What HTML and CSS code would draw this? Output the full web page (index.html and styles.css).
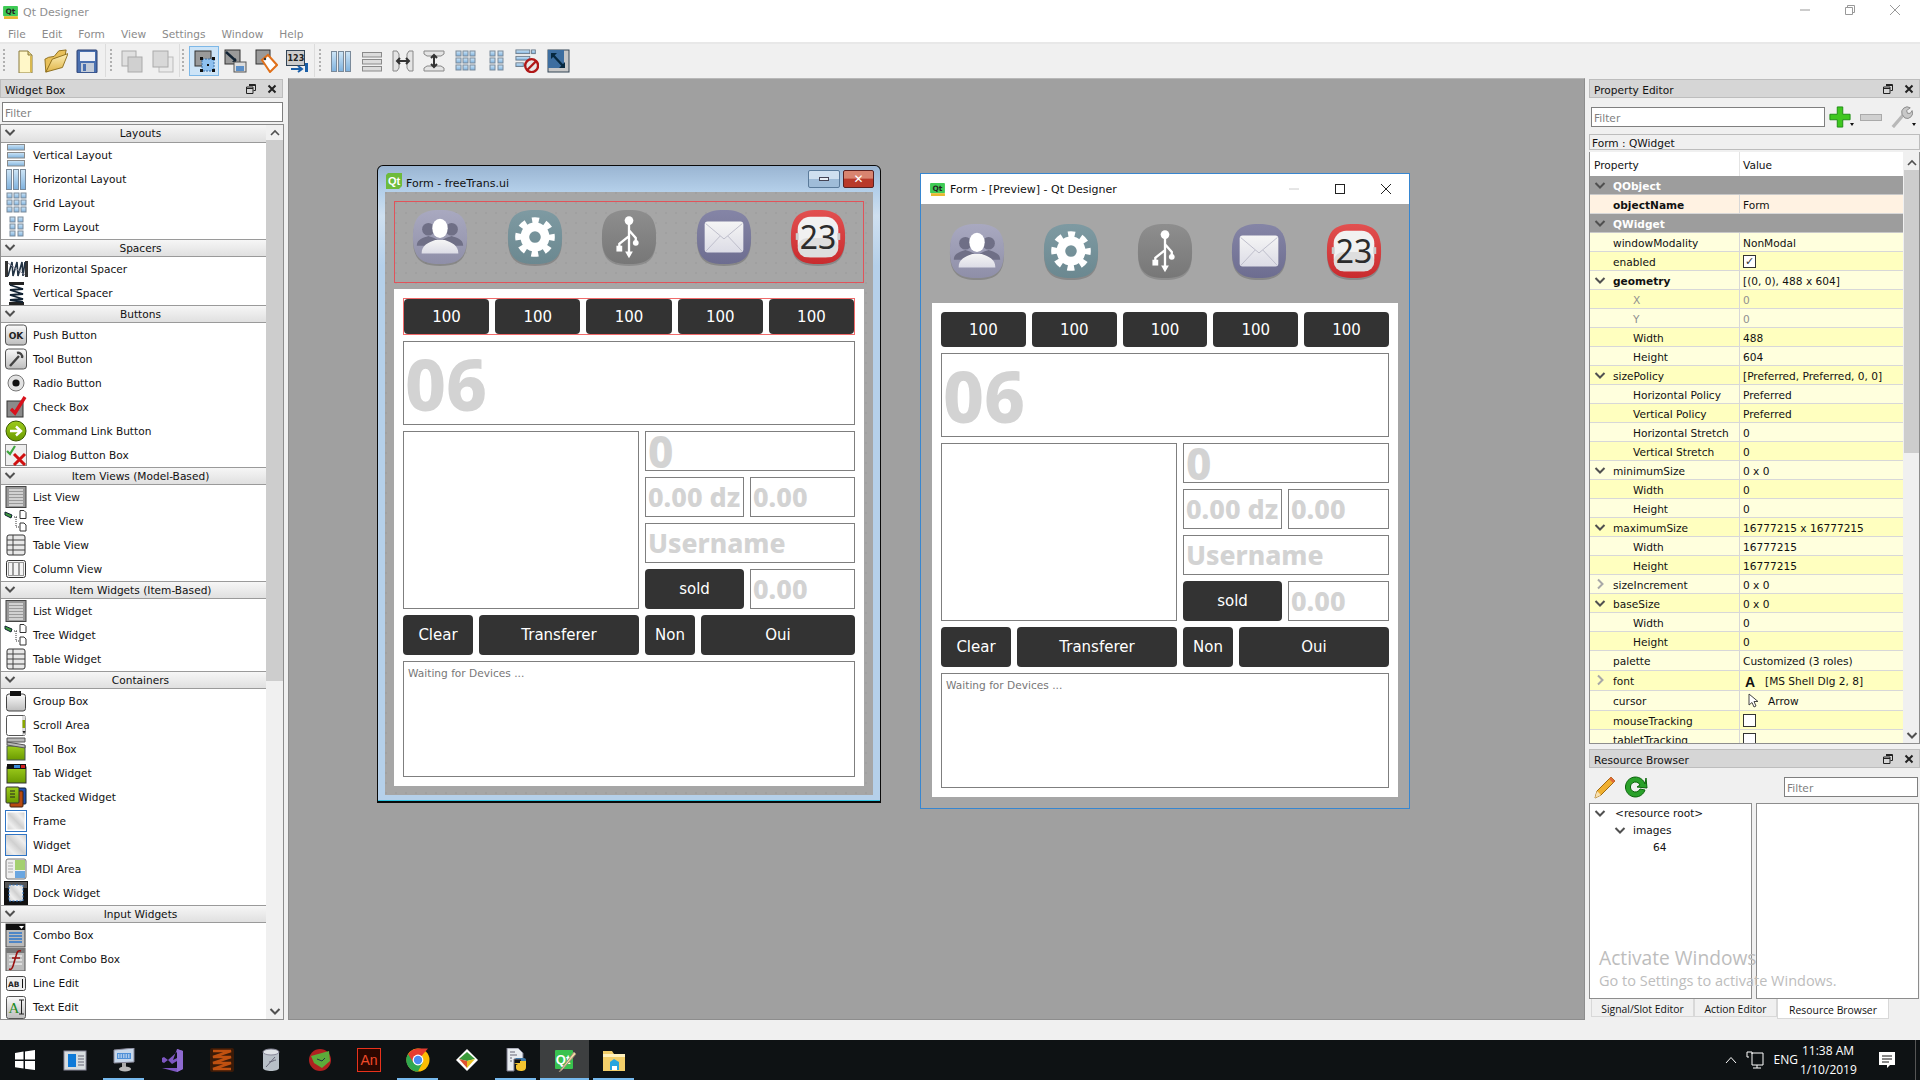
FILE: index.html
```html
<!DOCTYPE html>
<html lang="en">
<head>
<meta charset="utf-8">
<title>Qt Designer</title>
<link rel="stylesheet" href="styles.css">
</head>
<body>
<svg class="defs" aria-hidden="true">
<defs>
<linearGradient id="gBtn" x1="0" y1="0" x2="0" y2="1"><stop offset="0" stop-color="#fafafa"/><stop offset="1" stop-color="#bdbdbd"/></linearGradient>
<linearGradient id="gBlue" x1="0" y1="0" x2="0" y2="1"><stop offset="0" stop-color="#cfe6f7"/><stop offset="1" stop-color="#7fb2de"/></linearGradient>
<linearGradient id="gUser" x1="0" y1="0" x2="0" y2="1"><stop offset="0" stop-color="#a9a9c0"/><stop offset="1" stop-color="#8f8fa8"/></linearGradient>
<linearGradient id="gGear" x1="0" y1="0" x2="0" y2="1"><stop offset="0" stop-color="#7e9aa2"/><stop offset="1" stop-color="#6b8890"/></linearGradient>
<linearGradient id="gUsb" x1="0" y1="0" x2="0" y2="1"><stop offset="0" stop-color="#8e8e8e"/><stop offset="1" stop-color="#777"/></linearGradient>
<linearGradient id="gMail" x1="0" y1="0" x2="0" y2="1"><stop offset="0" stop-color="#8585a6"/><stop offset="1" stop-color="#6d6d90"/></linearGradient>
<linearGradient id="gCal" x1="0" y1="0" x2="0" y2="1"><stop offset="0" stop-color="#e25050"/><stop offset="1" stop-color="#c92b2e"/></linearGradient>
<linearGradient id="gEnv" x1="0" y1="0" x2="0" y2="1"><stop offset="0" stop-color="#f5f5f5"/><stop offset="1" stop-color="#dcdce6"/></linearGradient>
<linearGradient id="gGreen" x1="0" y1="0" x2="0" y2="1"><stop offset="0" stop-color="#9ccb1c"/><stop offset="1" stop-color="#6a9a00"/></linearGradient>
<linearGradient id="gFolder" x1="0" y1="0" x2="0" y2="1"><stop offset="0" stop-color="#fdf0b8"/><stop offset="1" stop-color="#e0b448"/></linearGradient>
<linearGradient id="gHatch" x1="0" y1="1" x2="1" y2="0"><stop offset="0" stop-color="#d0d0d0"/><stop offset=".25" stop-color="#eee"/><stop offset=".5" stop-color="#d0d0d0"/><stop offset=".75" stop-color="#eee"/><stop offset="1" stop-color="#d0d0d0"/></linearGradient>

<symbol id="chev" viewBox="0 0 12 12"><path d="M1.5 4 L6 8.5 L10.5 4" fill="none" stroke="#505050" stroke-width="2"/></symbol>
<symbol id="chevr" viewBox="0 0 12 12"><path d="M4 1.5 L8.5 6 L4 10.5" fill="none" stroke="#a8a8a8" stroke-width="2"/></symbol>
<symbol id="up" viewBox="0 0 12 12"><path d="M2 8 L6 4 L10 8" fill="none" stroke="#505050" stroke-width="1.6"/></symbol>
<symbol id="dockfloat" viewBox="0 0 10 10"><path d="M3 .5h6.5v6h-2M.5 3h6.5v6.5H.5z M.5 4.5H7 M3 1.5h6.5" fill="none" stroke="#222" stroke-width="1"/></symbol>
<symbol id="dockclose" viewBox="0 0 10 10"><path d="M1.5 1.5 L8.5 8.5 M8.5 1.5 L1.5 8.5" stroke="#222" stroke-width="2"/></symbol>

<symbol id="vlay" viewBox="0 0 24 24"><g fill="url(#gBlue)" stroke="#8a8a8a"><rect x="3.5" y="1.5" width="17" height="5.5"/><rect x="3.5" y="9.5" width="17" height="5.5"/><rect x="3.5" y="17.5" width="17" height="5.5"/></g></symbol>
<symbol id="hlay" viewBox="0 0 24 24"><g fill="url(#gBlue)" stroke="#7a8a9a"><rect x="2.5" y="2.5" width="5" height="20"/><rect x="9.5" y="2.5" width="5" height="20"/><rect x="16.5" y="2.5" width="5" height="20"/></g></symbol>
<symbol id="vlaygrey" viewBox="0 0 24 24"><g fill="#dcdcdc" stroke="#8a8a8a"><rect x="2.5" y="3.5" width="19" height="4.5"/><rect x="2.5" y="10.5" width="19" height="4.5"/><rect x="2.5" y="17.5" width="19" height="4.5"/></g></symbol>
<symbol id="grid" viewBox="0 0 24 24"><g fill="url(#gBlue)" stroke="#7a8a9a"><rect x="3" y="2" width="5" height="5"/><rect x="10" y="2" width="5" height="5"/><rect x="17" y="2" width="5" height="5"/><rect x="3" y="9" width="5" height="5"/><rect x="10" y="9" width="5" height="5"/><rect x="17" y="9" width="5" height="5"/><rect x="3" y="16" width="5" height="5"/><rect x="10" y="16" width="5" height="5"/><rect x="17" y="16" width="5" height="5"/></g></symbol>
<symbol id="form" viewBox="0 0 24 24"><g fill="url(#gBlue)" stroke="#7a8a9a"><rect x="6" y="2" width="5" height="5"/><rect x="14" y="2" width="5" height="5"/><rect x="6" y="9" width="5" height="5"/><rect x="14" y="9" width="5" height="5"/><rect x="6" y="16" width="5" height="5"/><rect x="14" y="16" width="5" height="5"/></g></symbol>
<symbol id="hspacer" viewBox="0 0 24 24"><rect x="1" y="4" width="3" height="16" fill="#333"/><rect x="21" y="4" width="3" height="16" fill="#333"/><path d="M4 19 L8 5 L9 19 L13 5 L14 19 L18 5 L19 19 L21 5" fill="none" stroke="#234" stroke-width="1.6"/><path d="M4 6 L21 18" stroke="#889" stroke-width="1"/></symbol>
<symbol id="vspacer" viewBox="0 0 24 24"><rect x="5" y="1" width="15" height="3" fill="#222"/><rect x="5" y="21" width="15" height="3" fill="#222"/><path d="M6 4 L19 8 L6 9 L19 13 L6 14 L19 18 L6 19 L19 21" fill="none" stroke="#123" stroke-width="1.8"/></symbol>
<symbol id="pushbtn" viewBox="0 0 24 24"><rect x="1.5" y="2" width="21" height="20" rx="3" fill="url(#gBtn)" stroke="#555"/><text x="12" y="15.5" text-anchor="middle" class="svgt" font-size="9">OK</text></symbol>
<symbol id="toolbtn" viewBox="0 0 24 24"><rect x="1.5" y="2" width="21" height="20" rx="3" fill="url(#gBtn)" stroke="#555"/><path d="M6 19 L15 9 M13 6 a4 4 0 0 1 5 5" fill="none" stroke="#444" stroke-width="2.4"/></symbol>
<symbol id="radio" viewBox="0 0 24 24"><circle cx="12" cy="12" r="8" fill="#e2e2e2" stroke="#777"/><circle cx="12" cy="12" r="3.6" fill="#111"/></symbol>
<symbol id="check" viewBox="0 0 24 24"><rect x="3" y="6" width="16" height="16" fill="#8a8a8a" stroke="#333"/><path d="M7 14 L11 18 L21 2" fill="none" stroke="#d8121d" stroke-width="3.4"/></symbol>
<symbol id="cmdlink" viewBox="0 0 24 24"><circle cx="12" cy="12" r="10" fill="url(#gGreen)" stroke="#3b5b00"/><path d="M6 12 H16 M12 7.5 L17 12 L12 16.5" fill="none" stroke="#fff" stroke-width="2.4"/></symbol>
<symbol id="dialog" viewBox="0 0 24 24"><rect x="1.5" y="1.5" width="21" height="21" fill="#eee" stroke="#888"/><path d="M3 8 L6 11 L11 3" fill="none" stroke="#3ca53c" stroke-width="2.2"/><path d="M10 11 L21 22 M21 11 L10 22" stroke="#d01010" stroke-width="3"/></symbol>
<symbol id="listv" viewBox="0 0 24 24"><rect x="2" y="1.5" width="20" height="21" fill="#9a9a9a" stroke="#444"/><path d="M5 5h14M5 8h14M5 11h14M5 14h14M5 17h14M5 20h14" stroke="#e4e4e4" stroke-width="1.4"/></symbol>
<symbol id="treev" viewBox="0 0 24 24"><path d="M1 3 L8 6 L7 9 L1 6Z" fill="#3e9a3e" stroke="#123"/><path d="M10 8h4M12 8v10h3" stroke="#333" stroke-dasharray="1 1" fill="none"/><path d="M16 1.5h4l2 2v6h-6zM16 14h4l2 2v6h-6z" fill="#fff" stroke="#333"/></symbol>
<symbol id="tablev" viewBox="0 0 24 24"><rect x="3" y="2" width="18" height="20" rx="2" fill="#e8e8e8" stroke="#333"/><path d="M3 7h18M3 12h18M3 17h18M9 2v20" stroke="#444"/></symbol>
<symbol id="colv" viewBox="0 0 24 24"><rect x="2.5" y="3.5" width="19" height="17" rx="2" fill="#f4f4f4" stroke="#333"/><path d="M9 5v14M15 5v14" stroke="#444"/><rect x="4.5" y="5.5" width="15" height="13" fill="none" stroke="#999"/></symbol>
<symbol id="group" viewBox="0 0 24 24"><rect x="2.5" y="5" width="19" height="17" rx="2.5" fill="url(#gBtn)" stroke="#444"/><rect x="6" y="2" width="11" height="5" fill="#111"/></symbol>
<symbol id="scroll" viewBox="0 0 24 24"><rect x="2.5" y="2.5" width="19" height="20" rx="2" fill="#fff" stroke="#555"/><rect x="18" y="3" width="3.5" height="19" fill="#ddd"/><rect x="18.5" y="7" width="2.5" height="8" fill="#8aa800"/><path d="M18.5 18h3l-1.5 3z" fill="#222"/></symbol>
<symbol id="toolbox" viewBox="0 0 24 24"><rect x="3" y="9" width="18" height="14" fill="url(#gGreen)" stroke="#455"/><path d="M3 1h18v4H3zM3 5l18 3v3L3 8z" fill="#b8b8b8" stroke="#555"/></symbol>
<symbol id="tabw" viewBox="0 0 24 24"><rect x="3" y="6" width="19" height="16" fill="url(#gGreen)" stroke="#333"/><rect x="3" y="3" width="19" height="5" fill="#111"/><rect x="10" y="4" width="6" height="3" fill="#3a8ad8"/><rect x="17" y="4" width="4" height="3" fill="#d02020"/></symbol>
<symbol id="stacked" viewBox="0 0 24 24"><rect x="9" y="3" width="13" height="16" rx="1" fill="#2050b0" stroke="#123"/><rect x="6" y="6" width="13" height="16" rx="1" fill="#b84a10" stroke="#421"/><rect x="2" y="2" width="13" height="16" rx="1" fill="url(#gGreen)" stroke="#333"/><path d="M6 6h5M6 9h5M6 12h5" stroke="#222"/></symbol>
<symbol id="frame" viewBox="0 0 24 24"><rect x="1.5" y="1.5" width="21" height="21" fill="#fff" stroke="#2f74c4"/><rect x="3.5" y="3.5" width="17" height="17" fill="url(#gHatch)"/></symbol>
<symbol id="widget" viewBox="0 0 24 24"><rect x="1.5" y="1.5" width="21" height="21" fill="url(#gHatch)" stroke="#2f74c4"/></symbol>
<symbol id="mdi" viewBox="0 0 24 24"><rect x="2" y="2" width="20" height="20" rx="2" fill="#eee" stroke="#777"/><rect x="11" y="3" width="10" height="10" fill="#a4d070"/><rect x="11" y="14" width="10" height="7" fill="#6aa6e0"/><path d="M4 6h5M4 9h5M4 12h5M4 15h5" stroke="#aaa"/></symbol>
<symbol id="dock" viewBox="0 0 24 24"><rect x="0" y="0" width="24" height="24" fill="#111"/><rect x="1" y="1" width="22" height="6" fill="#555"/><rect x="5" y="4" width="14" height="16" fill="url(#gHatch)" stroke="#2f74c4" stroke-dasharray="2 1.5"/></symbol>
<symbol id="combo" viewBox="0 0 24 24"><rect x="2" y="1" width="19" height="23" fill="#bbb" stroke="#444"/><rect x="2" y="1" width="19" height="6" fill="#111"/><path d="M15 3h5l-2.5 3z" fill="#fff"/><path d="M5 10h13M5 13h13M5 16h13M5 19h13" stroke="#4f86c6" stroke-width="2"/></symbol>
<symbol id="fontcombo" viewBox="0 0 24 24"><rect x="2" y="1" width="19" height="23" fill="#bbb" stroke="#555"/><rect x="2" y="1" width="19" height="5" fill="#777"/><path d="M5 9h13M5 13h13M5 17h13" stroke="#ddd" stroke-width="2"/><path d="M17 4c-3-1-4 1-5 5l-3 10c-1 3-2 4-4 3M8 11h8" fill="none" stroke="#9a1010" stroke-width="1.6"/></symbol>
<symbol id="lineedit" viewBox="0 0 24 24"><rect x="2.5" y="5.5" width="19" height="14" rx="2" fill="#eee" stroke="#444"/><text x="4" y="15.5" class="svgt" font-size="7.5">AB</text><path d="M18.5 8v9" stroke="#111"/></symbol>
<symbol id="textedit" viewBox="0 0 24 24"><rect x="2.5" y="1.5" width="19" height="22" rx="2" fill="url(#gBtn)" stroke="#555"/><text x="4.5" y="18" class="svgs" font-size="15" fill="#1f8a1f">A</text><path d="M15 5h5M15 19h5M17.5 5v14" stroke="#222"/></symbol>

<symbol id="newdoc" viewBox="0 0 24 24"><path d="M6 2h9l4 4v18H6z" fill="#fff7c8" stroke="#8a7a3a"/><path d="M15 2v4h4" fill="#e4d38a" stroke="#8a7a3a"/><path d="M18 7v16" stroke="#d8b850" stroke-width="2"/></symbol>
<symbol id="openf" viewBox="0 0 26 26"><path d="M2 25 L1 11 L5 9 L11 8 L16 2 L24 1 L22 12Z" fill="#e8c05a" stroke="#8a6a18"/><path d="M2 25 L9 11 L26 5 L20 20Z" fill="url(#gFolder)" stroke="#8a6a18"/></symbol>
<symbol id="save" viewBox="0 0 24 24"><rect x="2" y="1" width="20" height="23" rx="1" fill="#4a70b0" stroke="#2a3f70"/><rect x="5" y="3" width="15" height="9" fill="#eef0f6"/><rect x="6" y="14" width="13" height="9" fill="#c4ccd8"/><rect x="8" y="15" width="3" height="7" fill="#4a70b0"/></symbol>
<symbol id="copyg" viewBox="0 0 24 24"><rect x="2" y="2" width="14" height="15" fill="#e0e0e0" stroke="#aaa"/><rect x="8" y="8" width="14" height="15" fill="#d0d0d0" stroke="#aaa"/></symbol>
<symbol id="copyg2" viewBox="0 0 24 24"><rect x="8" y="8" width="14" height="15" fill="#eaeaea" stroke="#bbb"/><rect x="2" y="2" width="15" height="16" fill="#d8d8d8" stroke="#aaa"/></symbol>
<symbol id="editw" viewBox="0 0 24 24"><rect x="3" y="2" width="16" height="15" fill="#9a9a9a" stroke="#333"/><rect x="10" y="10" width="12" height="12" fill="#8ec0ef" stroke="#3a6ea5" stroke-dasharray="2 1"/><g fill="#111"><rect x="8" y="8" width="3" height="3"/><rect x="20" y="8" width="3" height="3"/><rect x="8" y="20" width="3" height="3"/><rect x="20" y="20" width="3" height="3"/><rect x="15" y="15" width="2" height="2"/></g></symbol>
<symbol id="signal" viewBox="0 0 24 24"><rect x="2" y="1" width="15" height="14" fill="#9a9a9a" stroke="#333"/><path d="M3 3 L13 12" stroke="#123" stroke-width="2.4"/><path d="M9 13h4v-4z" fill="#123"/><rect x="11" y="13" width="12" height="10" fill="#ddd" stroke="#555"/><rect x="13" y="17" width="8" height="5" fill="#5b8fc8"/></symbol>
<symbol id="buddy" viewBox="0 0 24 24"><rect x="2" y="1" width="14" height="14" fill="#9a9a9a" stroke="#333"/><path d="M8 11 L14 6 L23 16 L16 23Z" fill="#fff" stroke="#e0701a" stroke-width="2"/><circle cx="11" cy="10" r="1.2" fill="#333"/></symbol>
<symbol id="taborder" viewBox="0 0 24 24"><rect x="1.5" y="1.5" width="18" height="15" fill="#ccc" stroke="#345"/><text x="2.5" y="12" class="svgt" font-size="8" fill="#1a4f8a">123</text><path d="M6 20h10M13 17l4 3-4 3" fill="none" stroke="#1a5fa8" stroke-width="2"/><rect x="20" y="14" width="3" height="9" fill="#1a5fa8"/></symbol>
<symbol id="hsplit" viewBox="0 0 24 24"><g fill="#e4e4e4" stroke="#888"><path d="M2 2h4l2 3v14l-2 3H2zM22 2h-4l-2 3v14l2 3h4z"/></g><path d="M6 12h12M9 9l-3 3 3 3M15 9l3 3-3 3" fill="none" stroke="#333" stroke-width="2"/></symbol>
<symbol id="vsplit" viewBox="0 0 24 24"><g fill="#e4e4e4" stroke="#888"><path d="M2 2h20v3l-3 2H5L2 5zM2 22h20v-3l-3-2H5l-3 2z"/></g><path d="M12 6v12M9 9l3-3 3 3M9 15l3 3 3-3" fill="none" stroke="#333" stroke-width="2"/></symbol>
<symbol id="breakl" viewBox="0 0 26 26"><g fill="url(#gBlue)" stroke="#6a7a8a"><rect x="1" y="1" width="15" height="4"/><rect x="18" y="1" width="4" height="4"/><rect x="1" y="8" width="15" height="4"/><rect x="1" y="15" width="8" height="4"/></g><circle cx="18" cy="18" r="7" fill="#e8e8e8" stroke="#b01818" stroke-width="2.6"/><path d="M13 23 L23 13" stroke="#b01818" stroke-width="2.6"/></symbol>
<symbol id="adjust" viewBox="0 0 24 24"><rect x="2" y="1" width="21" height="22" fill="#c8c8c8" stroke="#345"/><rect x="2" y="1" width="16" height="18" fill="#3d6ea0"/><path d="M6 5 L18 18" stroke="#06283f" stroke-width="2.4"/><path d="M5 10V4h6zM19 13v6h-6z" fill="#06283f"/></symbol>

<symbol id="plus" viewBox="0 0 24 24"><path d="M9 1h6v8h8v6h-8v8H9v-8H1V9h8z" fill="#3fc71f" stroke="#1b8a10"/></symbol>
<symbol id="wrench" viewBox="0 0 24 24"><path d="M2 23 L14 9" stroke="#b8b8b8" stroke-width="3.6"/><path d="M12 9 a6 6 0 0 1 9-7 l-4 3 1 3 3 0 2-3 a6 6 0 0 1-8 8z" fill="#c8c8c8" stroke="#888"/></symbol>
<symbol id="pencil" viewBox="0 0 24 24"><path d="M2 23 L4 16 L18 2 L22 6 L8 20Z" fill="#f0b030" stroke="#a06a10"/><path d="M18 2 L22 6 L20 8 L16 4Z" fill="#e06a3a"/><path d="M2 23 L4 16 L8 20Z" fill="#f7e0b0"/></symbol>
<symbol id="refresh" viewBox="0 0 24 24"><path d="M21 9 A10 10 0 1 0 21 15 L16 14 A5 5 0 1 1 16 10 L13 12 L23 13 L22 3Z" fill="#2aa12a" stroke="#0b640b" stroke-width="1"/></symbol>
<symbol id="cursor" viewBox="0 0 12 16"><path d="M1 1 L1 12 L4 9.5 L6 14 L8 13 L6 8.5 L10 8.5Z" fill="#fff" stroke="#444"/></symbol>
<symbol id="qtlogo" viewBox="0 0 16 16"><path d="M2 0h14v13l-3 3H0V2z" fill="#6dbb3c"/><text x="8" y="12" text-anchor="middle" class="svgb" font-size="11" fill="#fff">Qt</text></symbol>
<symbol id="qtdes" viewBox="0 0 16 14"><rect x="0" y="0" width="16" height="11" rx="1" fill="#3fcb55"/><text x="8" y="8.5" text-anchor="middle" class="svgt" font-size="8" fill="#fff">Qt</text><rect x="1" y="11" width="15" height="3" fill="#e8b830"/></symbol>

<symbol id="aUser" viewBox="0 0 60 60"><path d="M30 3 C51 3 58 11 58 31 C58 51 51 59 30 59 C9 59 2 51 2 31 C2 11 9 3 30 3Z" fill="#000" opacity=".18"/><path d="M30 1 C51 1 58 9 58 29 C58 49 51 57 30 57 C9 57 2 49 2 29 C2 9 9 1 30 1Z" fill="url(#gUser)"/><g fill="#6f6f86"><circle cx="18" cy="21" r="6.5"/><path d="M6 38 C6 31 13 30 18 28 C23 30 30 31 30 38Z"/><circle cx="42" cy="21" r="6.5"/><path d="M30 38 C30 31 37 30 42 28 C47 30 54 31 54 38Z"/></g><ellipse cx="30" cy="20" rx="8" ry="10" fill="#fff"/><path d="M11 46 C11 37 18 35 25 32 L35 32 C42 35 49 37 49 46Z" fill="url(#gEnv)"/></symbol>
<symbol id="aGear" viewBox="0 0 60 60"><path d="M30 3 C51 3 58 11 58 31 C58 51 51 59 30 59 C9 59 2 51 2 31 C2 11 9 3 30 3Z" fill="#000" opacity=".18"/><path d="M30 1 C51 1 58 9 58 29 C58 49 51 57 30 57 C9 57 2 49 2 29 C2 9 9 1 30 1Z" fill="url(#gGear)"/><circle cx="30" cy="29" r="10.5" fill="none" stroke="#fff" stroke-width="9"/><circle cx="30" cy="29" r="17" fill="none" stroke="#fff" stroke-width="7" stroke-dasharray="7 6.35" stroke-dashoffset="3.5"/></symbol>
<symbol id="aUsb" viewBox="0 0 60 60"><path d="M30 3 C51 3 58 11 58 31 C58 51 51 59 30 59 C9 59 2 51 2 31 C2 11 9 3 30 3Z" fill="#000" opacity=".15"/><path d="M30 1 C51 1 58 9 58 29 C58 49 51 57 30 57 C9 57 2 49 2 29 C2 9 9 1 30 1Z" fill="url(#gUsb)"/><circle cx="30" cy="12" r="4.5" fill="#fff"/><path d="M30 12 V48 M30 22 L37 30 V34 M30 28 L20 36 V40" fill="none" stroke="#fff" stroke-width="2.4"/><circle cx="37" cy="35" r="3" fill="#fff"/><rect x="17" y="38" width="6" height="6" fill="#fff"/><path d="M26 44 h8 l-4 7z" fill="#fff"/></symbol>
<symbol id="aMail" viewBox="0 0 60 60"><path d="M30 3 C51 3 58 11 58 31 C58 51 51 59 30 59 C9 59 2 51 2 31 C2 11 9 3 30 3Z" fill="#000" opacity=".18"/><path d="M30 1 C51 1 58 9 58 29 C58 49 51 57 30 57 C9 57 2 49 2 29 C2 9 9 1 30 1Z" fill="url(#gMail)"/><rect x="10" y="13" width="40" height="32" rx="3" fill="url(#gEnv)"/><path d="M11 15 L30 31 L49 15 M11 44 L26 28 M49 44 L34 28" fill="none" stroke="#bdbdca" stroke-width="1"/></symbol>
<symbol id="aCal" viewBox="0 0 60 60"><path d="M30 3 C51 3 58 11 58 31 C58 51 51 59 30 59 C9 59 2 51 2 31 C2 11 9 3 30 3Z" fill="#000" opacity=".18"/><path d="M30 1 C51 1 58 9 58 29 C58 49 51 57 30 57 C9 57 2 49 2 29 C2 9 9 1 30 1Z" fill="url(#gCal)"/><rect x="9" y="8" width="42" height="42" rx="13" fill="#f1f1f1"/><rect x="9" y="30" width="42" height="20" rx="10" fill="#dedede"/><rect x="7" y="25" width="3" height="7" fill="#ccc"/><rect x="50" y="25" width="3" height="7" fill="#ccc"/><text x="30" y="41" text-anchor="middle" class="svgo" font-size="33" fill="#2c2c2c">23</text></symbol>

<symbol id="tWin" viewBox="0 0 24 24"><path d="M2 5 L10.5 3.6 V11.5 H2Z M12 3.4 L22 2 V11.5 H12Z M2 13 H10.5 V20.6 L2 19.2Z M12 13 H22 V22 L12 20.8Z" fill="#fff"/></symbol>
<symbol id="tDoc" viewBox="0 0 24 24"><rect x="1" y="3" width="22" height="19" fill="#d8dde0" stroke="#889"/><rect x="5" y="6" width="8" height="13" fill="#0f7ad8"/><path d="M15 8h6M15 11h6M15 14h6M15 17h6" stroke="#667"/></symbol>
<symbol id="tMon" viewBox="0 0 24 24"><path d="M2 2 L22 0 V14 L2 15Z" fill="#c8d8ea" stroke="#889"/><path d="M5 5h14v6H5z" fill="#4e90d8"/><path d="M6 7h12M6 9h12" stroke="#fff" stroke-dasharray="1.5 1"/><rect x="10" y="15" width="4" height="4" fill="#aaa"/><ellipse cx="13" cy="21" rx="6" ry="2.6" fill="#b8b8b8"/></symbol>
<symbol id="tVs" viewBox="0 0 24 24"><path d="M16 1 L22 3 V21 L16 24 L1 20 L16 20 V4 L7 12 L3 9 L1 10 V14 L3 15 L7 12 L11 16 L16 13 V10 L12 12" fill="#7e57c2"/><path d="M16 1 L22 3 V21 L16 24Z" fill="#8e6ad0"/></symbol>
<symbol id="tZig" viewBox="0 0 24 24"><rect x="0" y="0" width="24" height="24" rx="2" fill="#3a1a08"/><path d="M3 3h18L3 9h18L3 15h18L3 21h18" fill="none" stroke="#c05010" stroke-width="2.4"/></symbol>
<symbol id="tDb" viewBox="0 0 24 24"><path d="M4 4v16c0 4 16 4 16 0V4z" fill="#b8c0c8"/><ellipse cx="12" cy="4" rx="8" ry="3" fill="#e0e4e8" stroke="#889"/><path d="M7 19 L16 9 M10 14c3 0 5-2 7-2" stroke="#667" fill="none"/></symbol>
<symbol id="tBall" viewBox="0 0 24 24"><circle cx="12" cy="12" r="11" fill="#b02020"/><path d="M3 8 L21 3 L22 13 L14 20 L6 15Z" fill="#5cab3a"/><path d="M9 11l5 2 3-3" stroke="#234" fill="none"/></symbol>
<symbol id="tAn" viewBox="0 0 24 24"><rect x=".5" y=".5" width="23" height="23" fill="#2a0700" stroke="#e8321c"/><text x="12" y="17" text-anchor="middle" class="svgs2" font-size="14" fill="#f04a2a">An</text></symbol>
<symbol id="tChrome" viewBox="0 0 24 24"><circle cx="12" cy="12" r="11.5" fill="#fbbc05"/><path d="M12 12 L2 17 A11.5 11.5 0 0 1 12 .5 H22 L12 12" fill="#e53c2f"/><path d="M2 6 A11.5 11.5 0 0 0 12 23.5 L17 14 L7 14Z" fill="#2fa84f"/><circle cx="12" cy="12" r="5.4" fill="#fff"/><circle cx="12" cy="12" r="4.2" fill="#4a8bf0"/></symbol>
<symbol id="tDia" viewBox="0 0 24 24"><path d="M12 1 L23 12 L12 23 L1 12Z" fill="#fff"/><path d="M12 4 L20 11 L12 13 L4 11Z" fill="#3a9a3a"/><path d="M4 11 L12 13 V20Z" fill="#e05030"/><path d="M20 11 L12 13 V20Z" fill="#e8c020"/></symbol>
<symbol id="tPy" viewBox="0 0 24 24"><path d="M3 0h11l5 5v6H10v12H3z" fill="#e8ecf0" stroke="#778"/><path d="M6 4h5M6 7h7M6 10h2M6 13h2" stroke="#667"/><path d="M11 11h6v4h5v-3c0-2-2-2-4-2h-6z" fill="#3f78a8"/><path d="M10 15h6v-2h-1 7v6c0 3-2 4-5 4s-5-1-5-3v-3h2z" fill="#f4c430"/></symbol>
<symbol id="tQt" viewBox="0 0 24 24"><rect x="2" y="2" width="18" height="19" rx="1" fill="#39c24f"/><text x="10" y="16" text-anchor="middle" class="svgb" font-size="13" fill="#fff">Qt</text><path d="M6 24 L21 4 L23 6 L9 22Z" fill="#f0d9a0" stroke="#987"/></symbol>
<symbol id="tFolder" viewBox="0 0 24 24"><path d="M1 3h9l2 3h11v17H1z" fill="#f3cf6a"/><rect x="1" y="6" width="22" height="3" fill="#fff1bd"/><path d="M8 14 L12 11 L17 14 V22 H8Z" fill="#27a5de"/><rect x="10" y="18" width="5" height="4" fill="#fff"/></symbol>
<symbol id="tNet" viewBox="0 0 18 18"><path d="M6 2h11v12H6z M3 6H1V1h5v2 M11 14v3 M7 17h8" fill="none" stroke="#fff"/></symbol>
<symbol id="tNote" viewBox="0 0 18 18"><path d="M1 1h16v13H12L9 17v-3H1z" fill="#fff"/><path d="M4 5h10M4 8h10M4 11h7" stroke="#111"/></symbol>
</defs>
</svg>

<div class="app">
  <header class="titlebar">
    <svg class="ico-title"><use href="#qtdes"/></svg>
    <span class="title-text">Qt Designer</span>
    <div class="winctl">
      <svg class="ctl" viewBox="0 0 14 14"><path d="M2 7h10" stroke="#999"/></svg>
      <svg class="ctl" viewBox="0 0 14 14"><path d="M2.5 4.5h7v7h-7z M4.5 4V2.5h7v7H10" fill="none" stroke="#999"/></svg>
      <svg class="ctl" viewBox="0 0 14 14"><path d="M2 2 L12 12 M12 2 L2 12" stroke="#999"/></svg>
    </div>
  </header>
  <nav class="menubar">
    <span>File</span><span>Edit</span><span>Form</span><span>View</span><span>Settings</span><span>Window</span><span>Help</span>
  </nav>
  <div class="toolbar">
    <div class="tgroup tg1"><i class="grip"></i>
      <span class="tbtn"><svg><use href="#newdoc"/></svg></span>
      <span class="tbtn"><svg><use href="#openf"/></svg></span>
      <span class="tbtn"><svg><use href="#save"/></svg></span>
    </div>
    <div class="tgroup tg2"><i class="grip"></i>
      <span class="tbtn"><svg><use href="#copyg"/></svg></span>
      <span class="tbtn"><svg><use href="#copyg2"/></svg></span>
    </div>
    <div class="tgroup tg3"><i class="grip"></i>
      <span class="tbtn active"><svg><use href="#editw"/></svg></span>
      <span class="tbtn"><svg><use href="#signal"/></svg></span>
      <span class="tbtn"><svg><use href="#buddy"/></svg></span>
      <span class="tbtn"><svg><use href="#taborder"/></svg></span>
    </div>
    <div class="tgroup tg4"><i class="grip"></i>
      <span class="tbtn"><svg><use href="#hlay"/></svg></span>
      <span class="tbtn"><svg><use href="#vlaygrey"/></svg></span>
      <span class="tbtn"><svg><use href="#hsplit"/></svg></span>
      <span class="tbtn"><svg><use href="#vsplit"/></svg></span>
      <span class="tbtn"><svg><use href="#grid"/></svg></span>
      <span class="tbtn"><svg><use href="#form"/></svg></span>
      <span class="tbtn"><svg><use href="#breakl"/></svg></span>
      <span class="tbtn"><svg><use href="#adjust"/></svg></span>
    </div>
  </div>

  <main class="main">
    <aside class="ldock">
      <div class="docktitle"><span>Widget Box</span><svg class="dk"><use href="#dockfloat"/></svg><svg class="dk"><use href="#dockclose"/></svg></div>
      <div class="lfilter"><div class="filter">Filter</div></div>
      <div class="wbox">
        <div class="wlist">
          <div class="wsec"><svg class="chev"><use href="#chev"/></svg><span>Layouts</span></div>
          <div class="wrow"><svg><use href="#vlay"/></svg>Vertical Layout</div>
          <div class="wrow"><svg><use href="#hlay"/></svg>Horizontal Layout</div>
          <div class="wrow"><svg><use href="#grid"/></svg>Grid Layout</div>
          <div class="wrow"><svg><use href="#form"/></svg>Form Layout</div>
          <div class="wsec"><svg class="chev"><use href="#chev"/></svg><span>Spacers</span></div>
          <div class="wrow"><svg><use href="#hspacer"/></svg>Horizontal Spacer</div>
          <div class="wrow"><svg><use href="#vspacer"/></svg>Vertical Spacer</div>
          <div class="wsec"><svg class="chev"><use href="#chev"/></svg><span>Buttons</span></div>
          <div class="wrow"><svg><use href="#pushbtn"/></svg>Push Button</div>
          <div class="wrow"><svg><use href="#toolbtn"/></svg>Tool Button</div>
          <div class="wrow"><svg><use href="#radio"/></svg>Radio Button</div>
          <div class="wrow"><svg><use href="#check"/></svg>Check Box</div>
          <div class="wrow"><svg><use href="#cmdlink"/></svg>Command Link Button</div>
          <div class="wrow"><svg><use href="#dialog"/></svg>Dialog Button Box</div>
          <div class="wsec"><svg class="chev"><use href="#chev"/></svg><span>Item Views (Model-Based)</span></div>
          <div class="wrow"><svg><use href="#listv"/></svg>List View</div>
          <div class="wrow"><svg><use href="#treev"/></svg>Tree View</div>
          <div class="wrow"><svg><use href="#tablev"/></svg>Table View</div>
          <div class="wrow"><svg><use href="#colv"/></svg>Column View</div>
          <div class="wsec"><svg class="chev"><use href="#chev"/></svg><span>Item Widgets (Item-Based)</span></div>
          <div class="wrow"><svg><use href="#listv"/></svg>List Widget</div>
          <div class="wrow"><svg><use href="#treev"/></svg>Tree Widget</div>
          <div class="wrow"><svg><use href="#tablev"/></svg>Table Widget</div>
          <div class="wsec"><svg class="chev"><use href="#chev"/></svg><span>Containers</span></div>
          <div class="wrow"><svg><use href="#group"/></svg>Group Box</div>
          <div class="wrow"><svg><use href="#scroll"/></svg>Scroll Area</div>
          <div class="wrow"><svg><use href="#toolbox"/></svg>Tool Box</div>
          <div class="wrow"><svg><use href="#tabw"/></svg>Tab Widget</div>
          <div class="wrow"><svg><use href="#stacked"/></svg>Stacked Widget</div>
          <div class="wrow"><svg><use href="#frame"/></svg>Frame</div>
          <div class="wrow"><svg><use href="#widget"/></svg>Widget</div>
          <div class="wrow"><svg><use href="#mdi"/></svg>MDI Area</div>
          <div class="wrow"><svg><use href="#dock"/></svg>Dock Widget</div>
          <div class="wsec"><svg class="chev"><use href="#chev"/></svg><span>Input Widgets</span></div>
          <div class="wrow"><svg><use href="#combo"/></svg>Combo Box</div>
          <div class="wrow"><svg><use href="#fontcombo"/></svg>Font Combo Box</div>
          <div class="wrow"><svg><use href="#lineedit"/></svg>Line Edit</div>
          <div class="wrow"><svg><use href="#textedit"/></svg>Text Edit</div>
        </div>
        <div class="vscroll wscroll">
          <svg class="sarrow"><use href="#up"/></svg>
          <div class="thumb"></div>
          <svg class="sarrow"><use href="#chev"/></svg>
        </div>
      </div>
    </aside>

    <section class="workspace">
      <article class="window win-a">
        <div class="wtitle">
          <svg class="wqt"><use href="#qtlogo"/></svg>
          <span class="wname">Form - freeTrans.ui</span>
          <div class="aeroctl">
            <span class="aero-min"><i></i></span>
            <span class="aero-close">&#x2715;</span>
          </div>
        </div>
        <div class="client gridded">
          <div class="iconbar outlined">
            <svg class="appicon"><use href="#aUser"/></svg>
            <svg class="appicon"><use href="#aGear"/></svg>
            <svg class="appicon"><use href="#aUsb"/></svg>
            <svg class="appicon"><use href="#aMail"/></svg>
            <svg class="appicon"><use href="#aCal"/></svg>
          </div>
          <div class="panel">
            <div class="btnrow outlined"><button class="b">100</button><button class="b">100</button><button class="b">100</button><button class="b">100</button><button class="b">100</button></div>
            <div class="field big">06</div>
            <div class="midrow">
              <div class="field listbox"></div>
              <div class="rightcol">
                <div class="field h40 f40">0</div>
                <div class="pair"><div class="field h40 f27 w99">0.00 dz</div><div class="field h40 f27 grow">0.00</div></div>
                <div class="field h40 f28">Username</div>
                <div class="pair"><button class="b w99 h40">sold</button><div class="field h40 f27 grow">0.00</div></div>
              </div>
            </div>
            <div class="actrow">
              <button class="b clear">Clear</button><button class="b transfer">Transferer</button><button class="b non">Non</button><button class="b oui">Oui</button>
            </div>
            <div class="field logbox">Waiting for Devices ...</div>
          </div>
        </div>
      </article>

      <article class="window win-b">
        <div class="wtitle">
          <svg class="wqt2"><use href="#qtdes"/></svg>
          <span class="wname">Form - [Preview] - Qt Designer</span>
          <div class="winctl2">
            <svg class="ctl2" viewBox="0 0 12 12"><path d="M1 6h10" stroke="#ccc"/></svg>
            <svg class="ctl2" viewBox="0 0 12 12"><rect x="1.5" y="1.5" width="9" height="9" fill="none" stroke="#222"/></svg>
            <svg class="ctl2" viewBox="0 0 12 12"><path d="M1 1 L11 11 M11 1 L1 11" stroke="#222"/></svg>
          </div>
        </div>
        <div class="client">
          <div class="iconbar">
            <svg class="appicon"><use href="#aUser"/></svg>
            <svg class="appicon"><use href="#aGear"/></svg>
            <svg class="appicon"><use href="#aUsb"/></svg>
            <svg class="appicon"><use href="#aMail"/></svg>
            <svg class="appicon"><use href="#aCal"/></svg>
          </div>
          <div class="panel">
            <div class="btnrow"><button class="b">100</button><button class="b">100</button><button class="b">100</button><button class="b">100</button><button class="b">100</button></div>
            <div class="field big">06</div>
            <div class="midrow">
              <div class="field listbox"></div>
              <div class="rightcol">
                <div class="field h40 f40">0</div>
                <div class="pair"><div class="field h40 f27 w99">0.00 dz</div><div class="field h40 f27 grow">0.00</div></div>
                <div class="field h40 f28">Username</div>
                <div class="pair"><button class="b w99 h40">sold</button><div class="field h40 f27 grow">0.00</div></div>
              </div>
            </div>
            <div class="actrow">
              <button class="b clear">Clear</button><button class="b transfer">Transferer</button><button class="b non">Non</button><button class="b oui">Oui</button>
            </div>
            <div class="field logbox">Waiting for Devices ...</div>
          </div>
        </div>
      </article>
    </section>

    <aside class="rdock">
      <div class="docktitle"><span>Property Editor</span><svg class="dk"><use href="#dockfloat"/></svg><svg class="dk"><use href="#dockclose"/></svg></div>
      <div class="pfilter">
        <div class="filter grow">Filter</div>
        <svg class="pf-ico"><use href="#plus"/></svg><i class="caret"></i>
        <span class="minus"></span>
        <svg class="pf-ico wr"><use href="#wrench"/></svg><i class="caret"></i>
      </div>
      <div class="objline">Form : QWidget</div>
      <div class="ptable">
        <div class="pcols">
          <div class="phead"><span class="pn">Property</span><span class="pv">Value</span></div>
          <div class="pgroup"><svg class="parrow"><use href="#chev"/></svg>QObject</div>
          <div class="prow name"><span class="pn l1 bold">objectName</span><span class="pv">Form</span></div>
          <div class="pgroup"><svg class="parrow"><use href="#chev"/></svg>QWidget</div>
          <div class="prow"><span class="pn l1">windowModality</span><span class="pv">NonModal</span></div>
          <div class="prow alt"><span class="pn l1">enabled</span><span class="pv"><i class="cb on">&#x2713;</i></span></div>
          <div class="prow"><span class="pn l1 bold"><svg class="parrow"><use href="#chev"/></svg>geometry</span><span class="pv">[(0, 0), 488 x 604]</span></div>
          <div class="prow alt dim"><span class="pn l2">X</span><span class="pv">0</span></div>
          <div class="prow dim"><span class="pn l2">Y</span><span class="pv">0</span></div>
          <div class="prow alt"><span class="pn l2">Width</span><span class="pv">488</span></div>
          <div class="prow"><span class="pn l2">Height</span><span class="pv">604</span></div>
          <div class="prow alt"><span class="pn l1"><svg class="parrow"><use href="#chev"/></svg>sizePolicy</span><span class="pv">[Preferred, Preferred, 0, 0]</span></div>
          <div class="prow"><span class="pn l2">Horizontal Policy</span><span class="pv">Preferred</span></div>
          <div class="prow alt"><span class="pn l2">Vertical Policy</span><span class="pv">Preferred</span></div>
          <div class="prow"><span class="pn l2">Horizontal Stretch</span><span class="pv">0</span></div>
          <div class="prow alt"><span class="pn l2">Vertical Stretch</span><span class="pv">0</span></div>
          <div class="prow"><span class="pn l1"><svg class="parrow"><use href="#chev"/></svg>minimumSize</span><span class="pv">0 x 0</span></div>
          <div class="prow alt"><span class="pn l2">Width</span><span class="pv">0</span></div>
          <div class="prow"><span class="pn l2">Height</span><span class="pv">0</span></div>
          <div class="prow alt"><span class="pn l1"><svg class="parrow"><use href="#chev"/></svg>maximumSize</span><span class="pv">16777215 x 16777215</span></div>
          <div class="prow"><span class="pn l2">Width</span><span class="pv">16777215</span></div>
          <div class="prow alt"><span class="pn l2">Height</span><span class="pv">16777215</span></div>
          <div class="prow"><span class="pn l1"><svg class="parrow"><use href="#chevr"/></svg>sizeIncrement</span><span class="pv">0 x 0</span></div>
          <div class="prow alt"><span class="pn l1"><svg class="parrow"><use href="#chev"/></svg>baseSize</span><span class="pv">0 x 0</span></div>
          <div class="prow"><span class="pn l2">Width</span><span class="pv">0</span></div>
          <div class="prow alt"><span class="pn l2">Height</span><span class="pv">0</span></div>
          <div class="prow tall"><span class="pn l1">palette</span><span class="pv">Customized (3 roles)</span></div>
          <div class="prow alt tall"><span class="pn l1"><svg class="parrow"><use href="#chevr"/></svg>font</span><span class="pv"><b class="fonta">A</b>[MS Shell Dlg 2, 8]</span></div>
          <div class="prow tall"><span class="pn l1">cursor</span><span class="pv"><svg class="curs"><use href="#cursor"/></svg>Arrow</span></div>
          <div class="prow alt"><span class="pn l1">mouseTracking</span><span class="pv"><i class="cb"></i></span></div>
          <div class="prow"><span class="pn l1">tabletTracking</span><span class="pv"><i class="cb"></i></span></div>
        </div>
        <div class="vscroll pscroll">
          <svg class="sarrow"><use href="#up"/></svg>
          <div class="thumb"></div>
          <svg class="sarrow"><use href="#chev"/></svg>
        </div>
      </div>
      <div class="docktitle rb"><span>Resource Browser</span><svg class="dk"><use href="#dockfloat"/></svg><svg class="dk"><use href="#dockclose"/></svg></div>
      <div class="rtools">
        <svg class="rt"><use href="#pencil"/></svg>
        <svg class="rt"><use href="#refresh"/></svg>
        <div class="filter rfilter">Filter</div>
      </div>
      <div class="rpanes">
        <div class="rtree">
          <div class="tnode n0"><svg class="parrow"><use href="#chev"/></svg>&lt;resource root&gt;</div>
          <div class="tnode n1"><svg class="parrow"><use href="#chev"/></svg>images</div>
          <div class="tnode n2">64</div>
        </div>
        <div class="rview"></div>
        <div class="activate"><div class="a1">Activate Windows</div><div class="a2">Go to Settings to activate Windows.</div></div>
      </div>
      <div class="tabs"><span class="tab t1">Signal/Slot Editor</span><span class="tab t2">Action Editor</span><span class="tab t3 cur">Resource Browser</span></div>
    </aside>
  </main>

  <div class="statusgap"></div>

  <footer class="taskbar">
    <span class="tk"><svg><use href="#tWin"/></svg></span>
    <span class="tk"><svg><use href="#tDoc"/></svg></span>
    <span class="tk run"><svg><use href="#tMon"/></svg></span>
    <span class="tk"><svg><use href="#tVs"/></svg></span>
    <span class="tk"><svg><use href="#tZig"/></svg></span>
    <span class="tk"><svg><use href="#tDb"/></svg></span>
    <span class="tk"><svg><use href="#tBall"/></svg></span>
    <span class="tk"><svg><use href="#tAn"/></svg></span>
    <span class="tk run"><svg><use href="#tChrome"/></svg></span>
    <span class="tk"><svg><use href="#tDia"/></svg></span>
    <span class="tk run"><svg><use href="#tPy"/></svg></span>
    <span class="tk run act"><svg><use href="#tQt"/></svg></span>
    <span class="tk run"><svg><use href="#tFolder"/></svg></span>
    <div class="tray">
      <svg class="tcaret" viewBox="0 0 12 8"><path d="M1 7 L6 1.5 L11 7" fill="none" stroke="#fff"/></svg>
      <svg class="tnet"><use href="#tNet"/></svg>
      <span class="eng">ENG</span>
      <div class="clock"><div>11:38 AM</div><div>1/10/2019</div></div>
      <svg class="tnote"><use href="#tNote"/></svg>
      <i class="showdesk"></i>
    </div>
  </footer>
</div>
</body>
</html>
```

FILE: styles.css
```css
* { box-sizing: border-box; }
html, body { margin: 0; padding: 0; }
body { width: 1920px; height: 1080px; overflow: hidden; font: 10.6px/1 "DejaVu Sans", sans-serif; color: #111; background: #f0f0f0; }
.defs { position: absolute; width: 0; height: 0; }
.svgt { font-family: "DejaVu Sans", sans-serif; font-weight: 700; fill: #222; }
.svgs { font-family: "Liberation Serif", serif; }
.svgs2 { font-family: "Liberation Sans", sans-serif; }
.svgb { font-family: "Liberation Sans", sans-serif; font-weight: 700; }
.svgo { font-family: "Noto Sans", sans-serif; }
.grow { flex: 1; }

.app { width: 1920px; height: 1080px; display: flex; flex-direction: column; overflow: hidden; background: #f0f0f0; }

.titlebar { height: 24px; background: #fff; display: flex; align-items: center; padding-left: 3px; flex: none; }
.ico-title { width: 15px; height: 13px; margin-right: 5px; }
.title-text { color: #8f8f8f; font-size: 11px; }
.winctl { margin-left: auto; display: flex; gap: 31px; padding-right: 18px; margin-top: -4px; }
.ctl { width: 14px; height: 14px; }

.menubar { height: 20px; background: #fff; border-bottom: 2px solid #e8e8e8; display: flex; padding: 2px 0 0 8px; gap: 16px; align-items: center; color: #8a8a8a; flex: none; }

.toolbar { height: 34px; display: flex; flex: none; background: #f0f0f0; }
.tgroup { display: flex; align-items: center; gap: 1px; border-right: 1px solid #dcdcdc; height: 33px; }
.tg1 { width: 106px; padding-left: 3px; }
.tg2 { width: 74px; padding-left: 4px; }
.tg3 { width: 135px; padding-left: 2px; }
.tg4 { padding-left: 4px; border-right: 0; }
.grip { width: 2px; height: 24px; margin-right: 4px; background-image: linear-gradient(#b0b0b0 50%, transparent 50%); background-size: 2px 4px; }
.tbtn { width: 30px; height: 30px; display: flex; align-items: center; justify-content: center; }
.tbtn svg { width: 24px; height: 24px; }
.tbtn.active { background: #cde4f7; border: 1px solid #7db8e8; }

.main { height: 942px; display: flex; flex: none; }
.ldock { width: 284px; flex: none; display: flex; flex-direction: column; padding-top: 1px; }
.rdock { width: 331px; flex: none; display: flex; flex-direction: column; padding-top: 1px; margin-left: 4px; }

.docktitle { height: 19px; flex: none; display: flex; align-items: center; background: #d6d6d6; border: 1px solid #bdbdbd; padding: 3px 0 0 4px; }
.ldock .docktitle { margin-right: 1px; }
.docktitle span { flex: 1; }
.dk { width: 10px; height: 10px; margin: -3px 11px 0 0; }
.dk:last-child { margin-right: 5px; }

.filter { height: 20px; border: 1px solid #7f7f7f; background: #fff; color: #7f7f7f; padding: 3px 0 0 2px; display: flex; align-items: center; }
.lfilter { padding: 4px 1px 2px 2px; flex: none; }

.wbox { flex: 1; display: flex; border: 1px solid #8d8d8d; border-left: 0; background: #fff; overflow: hidden; min-height: 0; }
.wlist { width: 266px; flex: none; overflow: hidden; background: #fff; border-left: 1px solid #8d8d8d; }
.wsec { height: 18px; display: flex; align-items: center; border-top: 1px solid #9a9a9a; border-bottom: 1px solid #9a9a9a; background: linear-gradient(#f6f6f6, #e0e0e0); position: relative; padding-left: 14px; }
.wsec:first-child { border-top: 0; }
.wsec span { flex: 1; text-align: center; }
.chev { position: absolute; left: 3px; top: 1px; width: 12px; height: 12px; }
.wrow { height: 24px; display: flex; align-items: center; padding-left: 3px; gap: 5px; }
.wrow svg { width: 24px; height: 24px; flex: none; }

.vscroll { width: 16px; flex: none; background: #f0f0f0; display: flex; flex-direction: column; align-items: center; }
.wscroll { width: 17px; }
.sarrow { width: 12px; height: 12px; margin: 2px 0; flex: none; }
.thumb { width: 100%; background: #cdcdcd; }
.wscroll .thumb { height: 541px; margin-bottom: auto; }
.wscroll .sarrow:first-child { margin: 2px 0 1px; }
.pscroll { border-left: 1px solid #f0f0f0; }
.pscroll .sarrow:first-child { margin: 5px 0 1px; }
.pscroll .thumb { height: 283px; margin-bottom: auto; }

.workspace { flex: 1; margin-left: 4px; background: #a0a0a0; position: relative; border: 1px solid #8d8d8d; border-top: 1px solid #b8b8b8; }

.window { position: absolute; display: flex; flex-direction: column; }
.win-a { left: 88px; top: 86px; width: 504px; height: 638px; border: 1px solid #0a0a0a; border-bottom: 2px solid #0a0a0a; border-radius: 6px 6px 0 0; padding: 0 7px 6px; background: linear-gradient(#9ab5d2 0, #b5d0ea 26px, #cfe0f0 50px, #b5d0ea 100px); box-shadow: inset 0 -1px 0 #2fc4e0; }
.win-b { left: 631px; top: 94px; width: 490px; height: 636px; border: 1px solid #3786d0; background: #a6a6a6; }

.wtitle { display: flex; align-items: center; flex: none; }
.win-a .wtitle { height: 26px; }
.win-b .wtitle { height: 30px; background: #fff; padding-left: 9px; }
.wqt { width: 16px; height: 16px; margin: 3px 4px 0 1px; }
.wqt2 { width: 15px; height: 13px; margin-right: 5px; }
.win-a .wname { margin-top: 8px; font-size: 11px; }
.win-b .wname { font-size: 11px; }
.aeroctl { margin-left: auto; display: flex; gap: 3px; margin-right: -1px; margin-top: -1px; }
.aero-min { width: 32px; height: 18px; border: 1px solid #5a7a9a; border-radius: 2px; background: linear-gradient(#cfe0f0 50%, #9fbcd8 50%); display: flex; align-items: center; justify-content: center; }
.aero-min i { width: 10px; height: 4px; background: #e8eef5; border: 1px solid #445; }
.aero-close { width: 31px; height: 18px; border: 1px solid #5a2020; border-radius: 2px; background: linear-gradient(#d88470 45%, #b8392a 50%); color: #fff; font: 700 12px/16px "DejaVu Sans", sans-serif; text-align: center; }
.winctl2 { margin-left: auto; display: flex; gap: 34px; padding-right: 17px; }
.ctl2 { width: 12px; height: 12px; }

.client { flex: 1; background: #a6a6a6; display: flex; flex-direction: column; min-height: 0; }
.gridded { background-color: #a6a6a6; background-image: radial-gradient(circle at 1px 1px, #a0a0a0 .8px, transparent 1px); background-size: 10px 10px; }
.win-a .client { padding: 9px; }
.win-b .client { padding: 11px; }

.iconbar { height: 82px; flex: none; display: flex; align-items: center; justify-content: space-between; margin-bottom: 6px; padding: 0 15.5px; }
.iconbar.outlined { border: 1px solid #e0535a; padding: 0 16px; }
.appicon { width: 58px; height: 58px; flex: none; margin-top: -9px; }
.win-b .appicon { margin-top: -8px; }

.panel { flex: 1; background: #fff; padding: 9px; display: flex; flex-direction: column; gap: 6px; min-height: 0; }
.btnrow { height: 35px; flex: none; display: flex; gap: 6px; }
.btnrow.outlined { height: 37px; padding: 0; border: 1px solid #f06a6a; }
.b { flex: 1; min-width: 0; border: 0; padding: 1px 0 0; border-radius: 4px; background: #333; color: #fff; font: 15px/1 "DejaVu Sans", sans-serif; }

.field { border: 1px solid #7f7f7f; background: #fff; color: #d3d3d3; font-family: "Noto Sans", sans-serif; font-weight: 800; display: flex; align-items: center; padding-left: 2px; }
.big { height: 84px; flex: none; font-size: 71px; padding-left: 1px; }
.midrow { height: 178px; flex: none; display: flex; gap: 6px; }
.listbox { width: 236px; flex: none; }
.rightcol { flex: 1; display: flex; flex-direction: column; gap: 6px; min-width: 0; }
.pair { display: flex; gap: 6px; flex: none; }
.h40 { height: 40px; flex-shrink: 0; }
.w99 { width: 99px; flex: none; }
.f40 { font-size: 44px; }
.f27 { font-size: 27px; padding-bottom: 1px; }
.f28 { font-size: 26.5px; }
.actrow { height: 40px; flex: none; display: flex; gap: 6px; }
.clear { flex: none; width: 70px; }
.transfer { flex: none; width: 160px; }
.non { flex: none; width: 50px; }
.oui { flex: 1; }
.logbox { flex: 1; align-items: flex-start; color: #777; font: 400 10.6px/1 "DejaVu Sans", sans-serif; padding: 6px 0 0 4px; min-height: 0; }

.pfilter { height: 36px; flex: none; display: flex; align-items: center; padding: 2px 0 0 2px; position: relative; }
.pfilter .filter { flex: none; width: 234px; }
.pf-ico { width: 22px; height: 22px; margin-left: 4px; }
.caret { width: 0; height: 0; border: 2.5px solid transparent; border-top: 3px solid #111; border-bottom: 0; align-self: flex-end; margin: 0 0 8px -1px; }
.minus { width: 22px; height: 7px; margin-left: 6px; background: #d0d0d0; border: 1px solid #aaa; }
.wr { margin-left: 9px; }
.objline { height: 16px; flex: none; background: #f0f0f0; border: 1px solid #bdbdbd; padding: 2px 0 0 2px; display: flex; align-items: center; }
.ptable { height: 592px; flex: none; margin-top: 2px; display: flex; border: 1px solid #8d8d8d; border-top: 0; background: #fff; overflow: hidden; width: 331px; }
.pcols { width: 313px; flex: none; overflow: hidden; }
.phead { height: 24px; background: #fff; display: flex; align-items: center; }
.pgroup { height: 19px; background: #9d9d9d; color: #fff; font-weight: 700; display: flex; align-items: center; padding: 2px 0 0 23px; position: relative; border-bottom: 1px solid #c8c8c8; }
.prow { height: 19px; display: flex; align-items: center; background: #ffffdd; border-bottom: 1px solid #d8d8d8; }
.prow.alt { background: #ffffbf; }
.prow.name { background: #fff2e2; }
.prow.dim { color: #909090; }
.prow.tall { height: 20px; }
.pn { width: 150px; flex: none; height: 100%; display: flex; align-items: center; border-right: 1px solid #d8d8d8; position: relative; padding-top: 2px; }
.pv { padding: 2px 0 0 3px; display: flex; align-items: center; }
.phead .pn { padding-left: 4px; border-right: 1px solid #e4e4e4; }
.l1 { padding-left: 23px; }
.l2 { padding-left: 43px; }
.bold { font-weight: 700; }
.parrow { position: absolute; left: 4px; top: 3px; width: 12px; height: 12px; }
.cb { width: 13px; height: 13px; margin-top: -2px; border: 1px solid #333; background: #fff; font: normal 11px/11px "DejaVu Sans", sans-serif; text-align: center; display: block; color: #333; }
.fonta { font: 700 14px/1 "Liberation Sans", sans-serif; width: 22px; padding-left: 2px; }
.curs { width: 12px; height: 16px; margin: -2px 8px 0 5px; }

.docktitle.rb { margin-top: 5px; }
.rtools { height: 35px; flex: none; display: flex; align-items: center; padding: 3px 0 0 4px; gap: 7px; }
.rt { width: 24px; height: 24px; }
.rfilter { margin-left: auto; width: 134px; margin-right: 2px; }
.rpanes { height: 196px; flex: none; display: flex; gap: 4px; position: relative; }
.rtree { width: 163px; border: 1px solid #8d8d8d; background: #fff; padding-top: 1px; flex: none; }
.rview { flex: 1; border: 1px solid #8d8d8d; background: #fff; margin-right: 1px; }
.tnode { height: 17px; display: flex; align-items: center; position: relative; }
.n0 { padding-left: 25px; }
.n1 { padding-left: 43px; }
.n1 .parrow { left: 24px; top: 2px; }
.n0 .parrow { top: 2px; }
.n2 { padding-left: 63px; }
.activate { position: absolute; left: 10px; top: 141px; color: #bdbdbd; font-family: "Open Sans", sans-serif; pointer-events: none; }
.a1 { font-size: 19.2px; line-height: 27px; }
.a2 { font-size: 14.5px; line-height: 20px; }
.tabs { display: flex; height: 20px; flex: none; padding-left: 2px; font-family: "Open Sans", sans-serif; font-size: 10.4px; }
.tab { height: 18px; display: flex; align-items: center; justify-content: center; border: 1px solid #d8d8d8; border-top: 0; background: #f0f0f0; padding-top: 3px; }
.t1 { width: 103px; }
.t2 { width: 83px; }
.t3 { width: 112px; }
.tab.cur { background: #fff; height: 20px; }

.statusgap { height: 20px; flex: none; background: #f0f0f0; }

.taskbar { height: 40px; flex: none; background: #0e1214; display: flex; align-items: center; color: #fff; position: relative; }
.tk { width: 49px; height: 40px; flex: none; display: flex; align-items: center; justify-content: center; position: relative; }
.tk:first-child { margin-right: 1px; }
.tk svg { width: 24px; height: 24px; }
.tk.run::after { content: ""; position: absolute; left: 4px; right: 4px; bottom: 0; height: 2px; background: #76b9ed; }
.tk.act { background: #3d3f40; }
.tk.act::after { left: 0; right: 0; }
.tray { margin-left: auto; display: flex; align-items: center; height: 40px; }
.tcaret { width: 12px; height: 8px; margin-right: 9px; }
.tnet { width: 18px; height: 18px; margin-right: 10px; }
.eng { font: 12px/1 "Open Sans", sans-serif; margin-right: 2px; }
.clock { font: 12px/19px "Open Sans", sans-serif; text-align: center; width: 56px; margin-right: 22px; }
.tnote { width: 18px; height: 18px; margin-right: 19px; }
.showdesk { width: 1px; height: 40px; background: #555; margin-right: 4px; }
```
